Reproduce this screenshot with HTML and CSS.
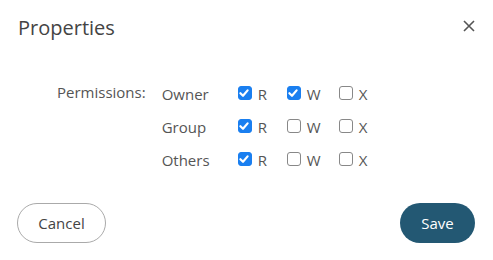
FILE: index.html
```html
<!DOCTYPE html>
<html>
<head>
<meta charset="utf-8">
<link rel="stylesheet" href="styles.css">
</head>
<body>
<div class="dialog">
  <div class="header">
    <h1 class="title">Properties</h1>
    <button class="close" aria-label="Close">
      <svg width="12" height="12" viewBox="0 0 12 12"><path d="M1 1L11 11M11 1L1 11" stroke="#555" stroke-width="1.6" fill="none"/></svg>
    </button>
  </div>
  <div class="body">
    <div class="label">Permissions:</div>
    <div class="grid">
      <div class="who">Owner</div>
      <label class="opt"><span class="cb on"><svg viewBox="0 0 14 14"><path d="M3.4 7.2L6 9.8L10.6 4.4" stroke="#fff" stroke-width="2.2" fill="none" stroke-linecap="round" stroke-linejoin="round"/></svg></span>R</label>
      <label class="opt"><span class="cb on"><svg viewBox="0 0 14 14"><path d="M3.4 7.2L6 9.8L10.6 4.4" stroke="#fff" stroke-width="2.2" fill="none" stroke-linecap="round" stroke-linejoin="round"/></svg></span>W</label>
      <label class="opt"><span class="cb"></span>X</label>
      <div class="who">Group</div>
      <label class="opt"><span class="cb on"><svg viewBox="0 0 14 14"><path d="M3.4 7.2L6 9.8L10.6 4.4" stroke="#fff" stroke-width="2.2" fill="none" stroke-linecap="round" stroke-linejoin="round"/></svg></span>R</label>
      <label class="opt"><span class="cb"></span>W</label>
      <label class="opt"><span class="cb"></span>X</label>
      <div class="who">Others</div>
      <label class="opt"><span class="cb on"><svg viewBox="0 0 14 14"><path d="M3.4 7.2L6 9.8L10.6 4.4" stroke="#fff" stroke-width="2.2" fill="none" stroke-linecap="round" stroke-linejoin="round"/></svg></span>R</label>
      <label class="opt"><span class="cb"></span>W</label>
      <label class="opt"><span class="cb"></span>X</label>
    </div>
  </div>
  <div class="footer">
    <button class="btn cancel">Cancel</button>
    <button class="btn save">Save</button>
  </div>
</div>
</body>
</html>
```
FILE: styles.css
```css
* { box-sizing: border-box; }
html, body { margin: 0; padding: 0; background: #fff; }
body { font-family: "Open Sans", sans-serif; color: #444; }
.dialog { width: 493px; height: 260px; padding: 0 18px 0 17px; display: flex; flex-direction: column; }
.header { display: flex; justify-content: space-between; align-items: center; height: 54px; }
.title { margin: 0 0 0 1px; font-size: 20px; font-weight: 400; color: #444; line-height: 27px; }
.close { border: 0; background: none; padding: 0; width: 12px; height: 12px; display: flex; margin-top: -2px; }
.body { display: flex; padding-left: 40px; padding-top: 27px; gap: 16px; font-size: 15px; }
.label { line-height: 22px; color: #555; }
.grid { display: grid; grid-template-columns: 76px 49px 52px 40px; row-gap: 11px; line-height: 22px; color: #555; margin-top: 2px; }
.opt { display: flex; align-items: center; gap: 6px; }
.cb { width: 14px; height: 14px; border: 1.5px solid #888; border-radius: 3px; display: inline-block; flex: none; margin-top: -2px; }
.cb.on { background: #1a7ff0; border-color: #1a7ff0; }
.cb svg { display: block; margin: -1.5px; width: 14px; height: 14px; }
.footer { margin-top: auto; margin-bottom: 17px; display: flex; justify-content: space-between; }
.btn { font-family: "Open Sans", sans-serif; font-size: 15px; height: 40px; border-radius: 20px; }
.cancel { width: 89px; background: #fff; border: 1px solid #aaa; color: #444; }
.save { width: 75px; background: #235873; border: 0; color: #fff; }
```
